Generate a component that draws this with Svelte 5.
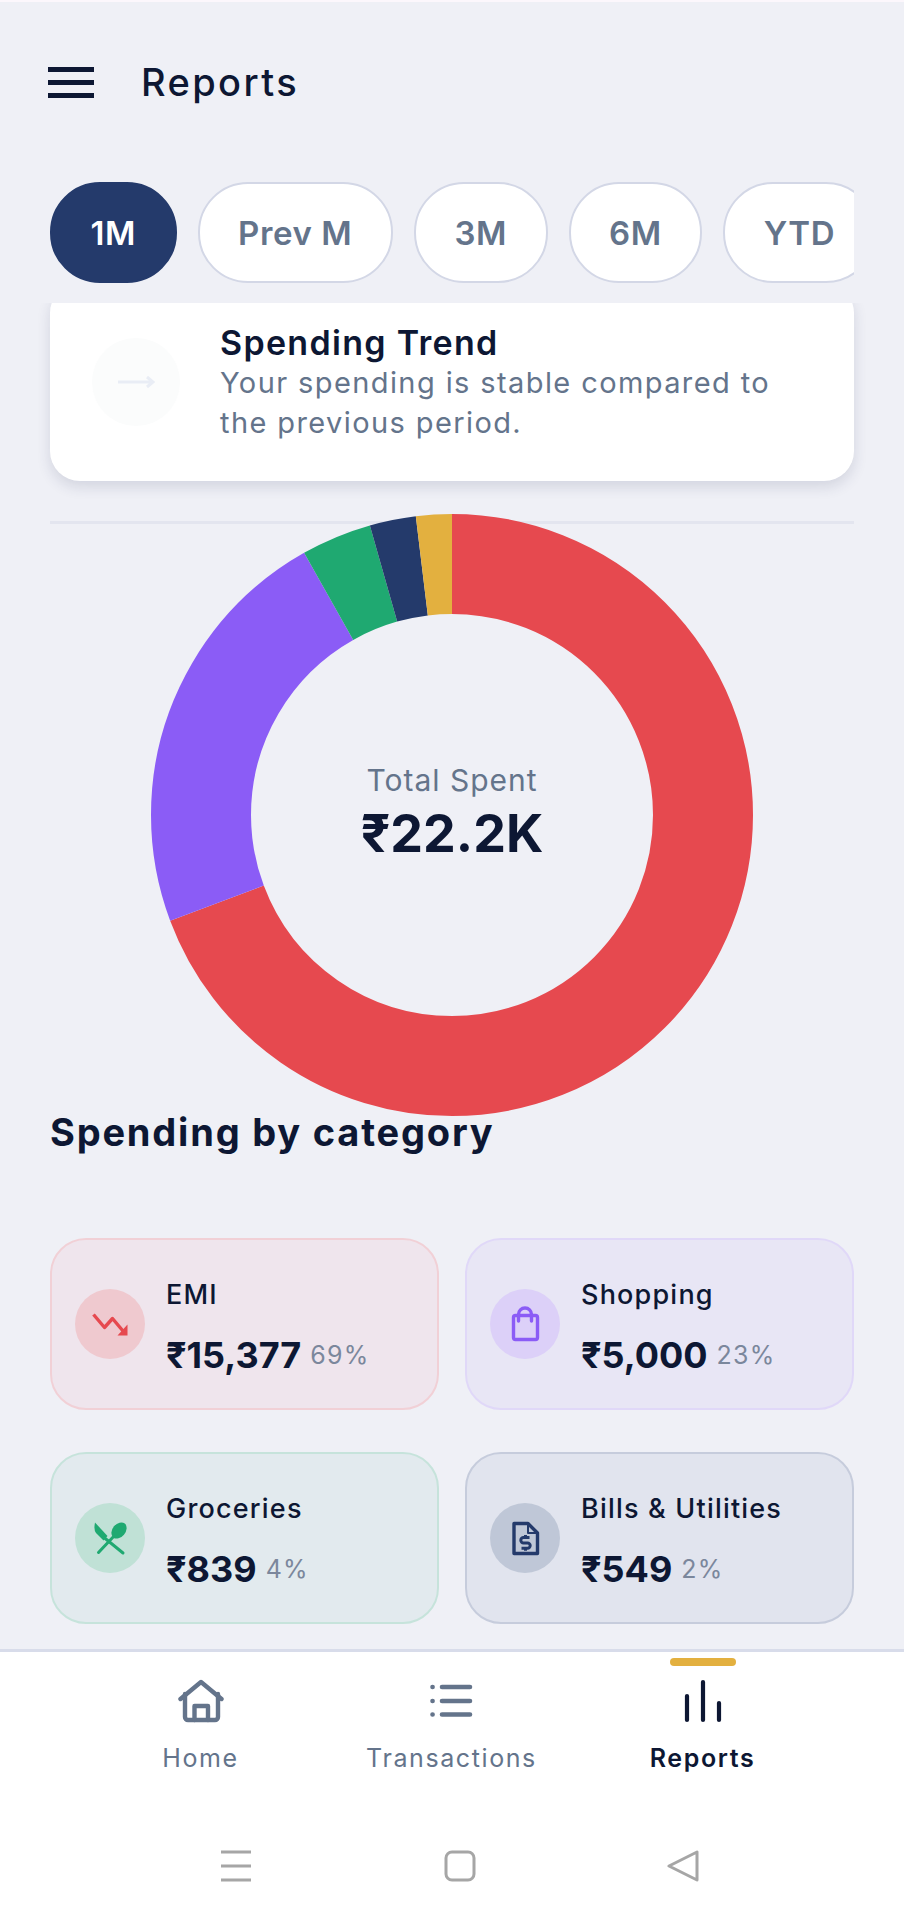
<script>
const ranges = ['1M', 'Prev M', '3M', '6M', 'YTD'];
let range = $state('1M');

const R = 251;
const C = 2 * Math.PI * R;
const spend = [
  { value: 15377, color: '#e6494f' },
  { value: 5000, color: '#8b5cf6' },
  { value: 839, color: '#1fa971' },
  { value: 549, color: '#243a6b' },
  { value: 436, color: '#e3b03f' }
];
const total = spend.reduce((sum, s) => sum + s.value, 0);
let offset = 0;
const slices = spend.map((s) => {
  const len = (s.value / total) * C;
  const slice = { color: s.color, len, start: offset };
  offset += len;
  return slice;
});

const categories = [
  { name: 'EMI', amount: '₹15,377', pct: '69%', tone: 'red', icon: 'trend' },
  { name: 'Shopping', amount: '₹5,000', pct: '23%', tone: 'purple', icon: 'bag' },
  { name: 'Groceries', amount: '₹839', pct: '4%', tone: 'green', icon: 'food' },
  { name: 'Bills & Utilities', amount: '₹549', pct: '2%', tone: 'navy', icon: 'bill' }
];
</script>

<div class="screen">
  <div class="status"></div>

  <header>
    <div class="burger"><span></span><span></span><span></span></div>
    <h1>Reports</h1>
  </header>

  <div class="pills">
    {#each ranges as r}
      <button class="pill" class:active={range === r} onclick={() => (range = r)}>{r}</button>
    {/each}
  </div>

  <main>
    <section class="trend">
      <div class="trend-icon">
        <svg width="38" height="14" viewBox="0 0 38 14" fill="none" stroke="#e9edf5" stroke-width="3">
          <path d="M1 7H35M30 2l6 5-6 5" />
        </svg>
      </div>
      <div class="trend-text">
        <h3>Spending Trend</h3>
        <p>Your spending is stable compared to the previous period.</p>
      </div>
    </section>

    <hr />

    <div class="donut">
      <svg width="604" height="604" viewBox="0 0 604 604" fill="none">
        <g transform="rotate(-90 302 302)">
          {#each slices as s}
            <circle
              cx="302"
              cy="302"
              r={R}
              stroke={s.color}
              stroke-width="100"
              stroke-dasharray="{s.len} {C - s.len}"
              stroke-dashoffset={-s.start}
            />
          {/each}
        </g>
      </svg>
      <div class="donut-label">
        <span>Total Spent</span>
        <strong>₹22.2K</strong>
      </div>
    </div>

    <h2>Spending by category</h2>

    <div class="grid">
      {#each categories as c}
        <article class="cat {c.tone}">
          <div class="cat-icon">
            <svg width="36" height="36" viewBox="0 0 36 36" fill="none" stroke-linecap="round" stroke-linejoin="round">
              {#if c.icon === 'trend'}
                <path d="M1.500 8.500 12.500 21.500 20.500 12.500 31 25" stroke="#e6494f" stroke-width="3.400" stroke-linecap="butt" />
                <path d="M35.500 29.500H25.500L35.500 18.500Z" fill="#e6494f" />
              {:else if c.icon === 'bag'}
                <rect x="6.500" y="9.500" width="24" height="24" rx="2" stroke="#8b5cf6" stroke-width="3.400" />
                <path d="M11.500 15V8.500a6.500 6.500 0 0 1 13 0V15" stroke="#8b5cf6" stroke-width="3.400" />
              {:else if c.icon === 'food'}
                <path d="M3 2.500 15.500 16 11.500 20.500 4 13Q1.500 10 3 2.500Z" fill="#1fa971" />
                <path d="M12 17.500 31 33" stroke="#1fa971" stroke-width="3" />
                <path d="M6.500 32.500 23 15" stroke="#1fa971" stroke-width="3" />
                <ellipse cx="27" cy="10.500" rx="6.500" ry="9" transform="rotate(40 27 10.500)" fill="#1fa971" />
              {:else}
                <path d="M7 3.500H21L30.500 13V33.500H7Z" stroke="#243a6b" stroke-width="3.400" />
                <path d="M21 3.500V13H30.500" stroke="#243a6b" stroke-width="2" />
                <path d="M22.500 17.500H16.500a2.700 2.700 0 0 0 0 5.400h4a2.700 2.700 0 0 1 0 5.400H14.500M18.500 15v2.500M18.500 28.300v2.500" stroke="#243a6b" stroke-width="3" stroke-linecap="butt" />
              {/if}
            </svg>
          </div>
          <div class="cat-text">
            <div class="cat-name">{c.name}</div>
            <div class="cat-row"><b>{c.amount}</b><span>{c.pct}</span></div>
          </div>
        </article>
      {/each}
    </div>
  </main>

  <nav>
    <div class="tabs">
      <div class="tab">
        <svg width="46" height="44" viewBox="0 0 46 44" fill="none" stroke="#64748b" stroke-width="4.400" stroke-linecap="round" stroke-linejoin="round">
          <path d="M2.500 20 23 3 43.500 20" />
          <path d="M7 15V38a3 3 0 0 0 3 3H37a3 3 0 0 0 3-3V15" />
          <path d="M16.500 41V27H30V41" />
        </svg>
        <span>Home</span>
      </div>
      <div class="tab">
        <svg width="46" height="44" viewBox="0 0 46 44" fill="none" stroke="#64748b" stroke-width="4.600" stroke-linecap="round">
          <path d="M13 8H41M13 22H41M13 35.500H41" />
          <path d="M3.500 8h.1M3.500 22h.1M3.500 35.500h.1" />
        </svg>
        <span>Transactions</span>
      </div>
      <div class="tab current">
        <i></i>
        <svg width="46" height="44" viewBox="0 0 46 44" fill="none" stroke="#0d1733" stroke-width="4.200" stroke-linecap="round">
          <path d="M7 41V17M23 41V3M39 41V24" />
        </svg>
        <span>Reports</span>
      </div>
    </div>

    <div class="system">
      <svg width="36" height="32" viewBox="0 0 36 32" fill="none" stroke="#a6a6a6" stroke-width="3">
        <path d="M3 2H33M3 16H33M3 30H33" />
      </svg>
      <svg width="36" height="32" viewBox="0 0 36 32" fill="none" stroke="#a6a6a6" stroke-width="3">
        <rect x="4" y="2" width="28" height="28" rx="6" />
      </svg>
      <svg width="36" height="32" viewBox="0 0 36 32" fill="none" stroke="#a6a6a6" stroke-width="3" stroke-linejoin="round">
        <path d="M31 2V30L3 16Z" />
      </svg>
    </div>
  </nav>
</div>

<style>
:global(body) {
  margin: 0;
  background: #eff0f6;
}

.screen {
  height: 1920px;
  display: flex;
  flex-direction: column;
  background: #eff0f6;
  color: #0d1733;
  font-family: Inter, "Liberation Sans", sans-serif;
  overflow: hidden;
}

.status {
  height: 2px;
  background: #fcf7fc;
}

header {
  display: flex;
  align-items: center;
  gap: 47px;
  padding: 50px 48px 0;
  height: 60px;
}

.burger {
  display: flex;
  flex-direction: column;
  gap: 8px;
  width: 46px;
}

.burger span {
  height: 5px;
  background: #0d1733;
}

h1 {
  margin: 0;
  font-size: 38px;
  font-weight: 500;
  letter-spacing: 2.4px;
}

.pills {
  display: flex;
  gap: 21px;
  margin: 70px 50px 0;
  height: 101px;
  overflow: hidden;
}

.pill {
  flex: none;
  padding: 0 38.500px;
  border: 2px solid #d3d7e6;
  border-radius: 50px;
  background: #fff;
  color: #64748b;
  font-family: inherit;
  font-size: 33px;
  font-weight: 600;
  letter-spacing: 0.6px;
}

.pill.active {
  background: #243a6b;
  border-color: #243a6b;
  color: #fff;
}

main {
  flex: 1;
  min-height: 0;
  margin-top: 20px;
  padding: 0 50px;
  overflow: hidden;
}

.trend {
  display: flex;
  align-items: center;
  gap: 40px;
  margin-top: -20px;
  height: 198px;
  padding: 0 42px;
  box-sizing: border-box;
  background: #fff;
  border-radius: 30px;
  box-shadow: 0 6px 14px rgba(40, 50, 90, 0.14);
}

.trend-icon {
  flex: none;
  width: 88px;
  height: 88px;
  border-radius: 50%;
  background: #fbfcfc;
  display: flex;
  align-items: center;
  justify-content: center;
}

.trend-text {
  padding-top: 2px;
}

h3 {
  margin: 0;
  font-size: 34px;
  font-weight: 600;
  line-height: 40px;
  letter-spacing: 1.3px;
}

p {
  margin: 0;
  font-size: 29px;
  line-height: 40px;
  letter-spacing: 1.4px;
  color: #64748b;
}

hr {
  margin: 40px 0 0;
  border: none;
  height: 3px;
  background: #e3e5ef;
}

.donut {
  position: relative;
  width: 604px;
  height: 604px;
  margin: -11px auto 0;
}

.donut svg {
  display: block;
}

.donut-label {
  position: absolute;
  inset: 0;
  padding-bottom: 4px;
  display: flex;
  flex-direction: column;
  align-items: center;
  justify-content: center;
}

.donut-label span {
  margin-bottom: 6px;
  font-size: 30px;
  line-height: 36px;
  letter-spacing: 1px;
  color: #64748b;
}

.donut-label strong {
  font-size: 52px;
  line-height: 60px;
  font-weight: 700;
}

h2 {
  margin: -7px 0 0;
  font-size: 38px;
  line-height: 44px;
  font-weight: 700;
  letter-spacing: 1.8px;
}

.grid {
  display: grid;
  grid-template-columns: 1fr 1fr;
  column-gap: 26px;
  row-gap: 42px;
  margin-top: 84px;
}

.cat {
  display: flex;
  align-items: center;
  gap: 21px;
  height: 172px;
  padding: 0 23px;
  box-sizing: border-box;
  border: 2px solid var(--line);
  border-radius: 36px;
  background: var(--bg);
}

.red { --bg: #efe5ed; --line: #f1d0d6; --dot: #efc9cf; }
.purple { --bg: #e8e6f5; --line: #e0d8f8; --dot: #dcd0f8; }
.green { --bg: #e2eaee; --line: #c6e3db; --dot: #c0e1d6; }
.navy { --bg: #e1e4ee; --line: #c6ccdc; --dot: #bfc7d7; }

.cat-icon {
  flex: none;
  width: 70px;
  height: 70px;
  border-radius: 50%;
  background: var(--dot);
  display: flex;
  align-items: center;
  justify-content: center;
}

.cat-text {
  padding-top: 8px;
}

.cat-name {
  font-size: 27px;
  font-weight: 500;
  line-height: 32px;
  letter-spacing: 1.2px;
}

.cat-row {
  display: flex;
  align-items: center;
  gap: 9px;
  margin-top: 22px;
}

.cat-row b {
  font-size: 36px;
  font-weight: 700;
  line-height: 44px;
}

.cat-row span {
  font-size: 25px;
  letter-spacing: 1.2px;
  color: #7b879c;
}

nav {
  height: 271px;
  box-sizing: border-box;
  border-top: 3px solid #d8dcea;
  background: #fff;
}

.tabs {
  display: grid;
  grid-template-columns: repeat(3, 251px);
  padding: 0 75px;
}

.tab {
  position: relative;
  display: flex;
  flex-direction: column;
  align-items: center;
  padding-top: 27px;
  font-size: 25px;
  line-height: 30px;
  letter-spacing: 1.6px;
  color: #64748b;
}

.tab span {
  margin-top: 20px;
}

.tab.current {
  color: #0d1733;
  font-weight: 600;
}

.tab i {
  position: absolute;
  top: 6px;
  width: 66px;
  height: 8px;
  border-radius: 4px;
  background: #e3b03f;
}

.system {
  display: flex;
  gap: 188px;
  padding: 77px 0 0 218px;
}
</style>
